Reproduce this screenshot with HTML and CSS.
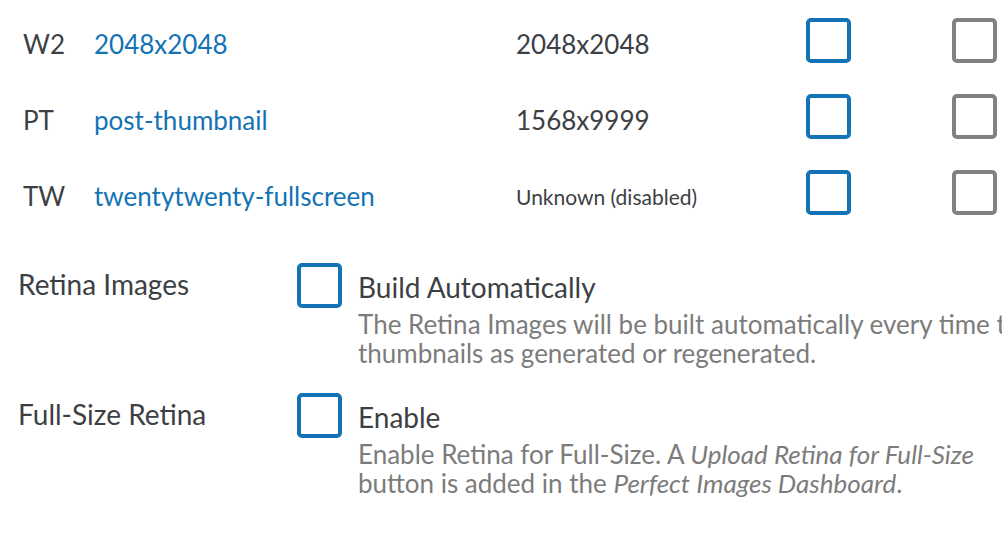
FILE: index.html
```html
<!DOCTYPE html>
<html>
  <head>
    <title>Retina Settings</title>
    <link rel="stylesheet" href="styles.css">
  </head>
  <body>
    <div class="sizes">
      <div class="size-row">
        <span class="code">W2</span>
        <a class="name" href="#">2048x2048</a>
        <span class="dims">2048x2048</span>
        <span class="box blue"></span>
        <span class="box grey"></span>
      </div>
      <div class="size-row">
        <span class="code">PT</span>
        <a class="name" href="#">post-thumbnail</a>
        <span class="dims">1568x9999</span>
        <span class="box blue"></span>
        <span class="box grey"></span>
      </div>
      <div class="size-row">
        <span class="code">TW</span>
        <a class="name" href="#">twentytwenty-fullscreen</a>
        <span class="dims small">Unknown (disabled)</span>
        <span class="box blue"></span>
        <span class="box grey"></span>
      </div>
    </div>

    <div class="options">
      <div class="option">
        <div class="option-label">Retina Images</div>
        <span class="box blue"></span>
        <div class="option-body">
          <div class="option-title">Build Automatically</div>
          <p class="desc">The Retina Images will be built automatically every time the thumbnails as generated or regenerated.</p>
        </div>
      </div>
      <div class="option">
        <div class="option-label">Full-Size Retina</div>
        <span class="box blue"></span>
        <div class="option-body">
          <div class="option-title">Enable</div>
          <p class="desc">Enable Retina for Full-Size. A <em>Upload Retina for Full-Size</em> button is added in the <em>Perfect Images Dashboard</em>.</p>
        </div>
      </div>
    </div>
  </body>
</html>
```

FILE: styles.css
```css
/* settings page, zoomed */
body {
  margin: 0;
  font-family: Lato, "Open Sans", sans-serif;
  background-color: #ffffff;
  color: #3c3f44;
  overflow: hidden;
}

.sizes {
  padding: 2px 0 0 23px;
}

.size-row {
  display: grid;
  grid-template-columns: 71px 422px 290px 146px 46px;
  align-items: center;
  height: 76px;
}

.code,
.name,
.dims {
  font-size: 26px;
  padding-top: 8px;
}

.name {
  color: #1473b4;
  text-decoration: none;
}

.dims.small {
  font-size: 21px;
}

.box {
  display: block;
  width: 37px;
  height: 37px;
  border: 4px solid #1473b4;
  border-radius: 5px;
}

.box.grey {
  border-color: #818181;
}

.options {
  padding: 33px 0 0 18px;
}

.option {
  display: flex;
  align-items: flex-start;
  margin-bottom: 25px;
}

.option-label {
  flex: none;
  width: 279px;
  font-size: 28px;
  line-height: 34px;
  padding-top: 4px;
}

.option .box {
  flex: none;
  margin-right: 16px;
}

.option-body {
  flex: none;
  width: 700px;
}

.option-title {
  font-size: 28px;
  line-height: 34px;
  padding-top: 7px;
}

.desc {
  margin: 6px 0 0;
  font-size: 26px;
  line-height: 29px;
  color: #7c7c7c;
  width: 690px;
}
```
